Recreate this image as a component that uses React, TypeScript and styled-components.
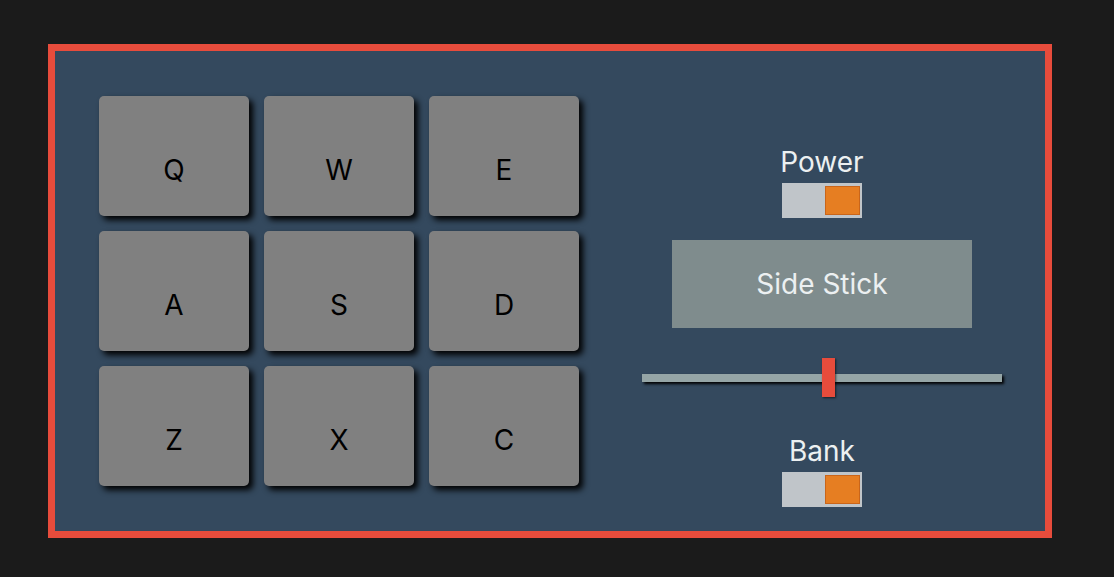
import React from "react";
import styled, { createGlobalStyle } from "styled-components";

const GlobalStyle = createGlobalStyle`
  html, body {
    margin: 0;
    padding: 0;
    background: #1b1b1b;
    font-family: Inter, "Noto Sans", "Liberation Sans", sans-serif;
  }
  * { box-sizing: border-box; }
`;

const Page = styled.div`
  width: 1114px;
  height: 577px;
  padding: 44px 0 0 48px;
`;

const Machine = styled.div`
  width: 1004px;
  height: 494px;
  border: 7px solid #e74c3c;
  background: #34495e;
  padding: 45px 42px 45px 44px;
  display: flex;
  gap: 63px;
`;

const PadGrid = styled.div`
  display: grid;
  grid-template-columns: repeat(3, 150px);
  grid-auto-rows: 120px;
  gap: 15px;
`;

const Pad = styled.button`
  border: none;
  border-radius: 5px;
  background: #808080;
  box-shadow: 4px 4px 6px #000;
  color: #000;
  font-family: inherit;
  font-size: 28px;
  line-height: 32px;
  display: flex;
  justify-content: center;
  align-items: flex-start;
  padding: 58px 0 0;
  cursor: pointer;
`;

const Controls = styled.div`
  width: 360px;
  display: flex;
  flex-direction: column;
  align-items: center;
  padding-top: 50px;
  & > * { flex-shrink: 0; }
`;

const Label = styled.div<{ $top?: number }>`
  color: #ecf0f1;
  font-size: 28px;
  line-height: 32px;
  margin-top: ${(p) => p.$top ?? 0}px;
`;

const Toggle = styled.div`
  width: 80px;
  height: 35px;
  margin-top: 5px;
  background: #c0c5c9;
  display: flex;
  justify-content: flex-end;
  align-items: center;
  padding: 2px 2px;
`;

const Knob = styled.div`
  width: 35px;
  height: 29px;
  background: #e67e22;
  border: 1px solid #c9651a;
`;

const Display = styled.div`
  width: 300px;
  height: 88px;
  margin-top: 22px;
  background: #7f8c8d;
  color: #ecf0f1;
  font-size: 28px;
  display: flex;
  align-items: center;
  justify-content: center;
`;

const Slider = styled.div`
  position: relative;
  width: 360px;
  height: 39px;
  margin-top: 30px;
  display: flex;
  align-items: center;
`;

const Track = styled.div`
  width: 100%;
  height: 8px;
  background: #95a5a6;
  box-shadow: 2px 2px 3px #000;
`;

const Thumb = styled.div`
  position: absolute;
  top: 0;
  width: 13px;
  height: 39px;
  background: #e74c3c;
  box-shadow: 1px 1px 2px rgba(0, 0, 0, 0.6);
`;

const keys = ["Q", "W", "E", "A", "S", "D", "Z", "X", "C"];

export default function App() {
  const volume = 0.5;
  return (
    <>
      <GlobalStyle />
      <Page>
        <Machine>
          <PadGrid>
            {keys.map((k) => (
              <Pad key={k}>{k}</Pad>
            ))}
          </PadGrid>
          <Controls>
            <Label>Power</Label>
            <Toggle>
              <Knob />
            </Toggle>
            <Display>Side Stick</Display>
            <Slider>
              <Track />
              <Thumb style={{ left: `${volume * 360}px` }} />
            </Slider>
            <Label $top={38}>Bank</Label>
            <Toggle>
              <Knob />
            </Toggle>
          </Controls>
        </Machine>
      </Page>
    </>
  );
}
